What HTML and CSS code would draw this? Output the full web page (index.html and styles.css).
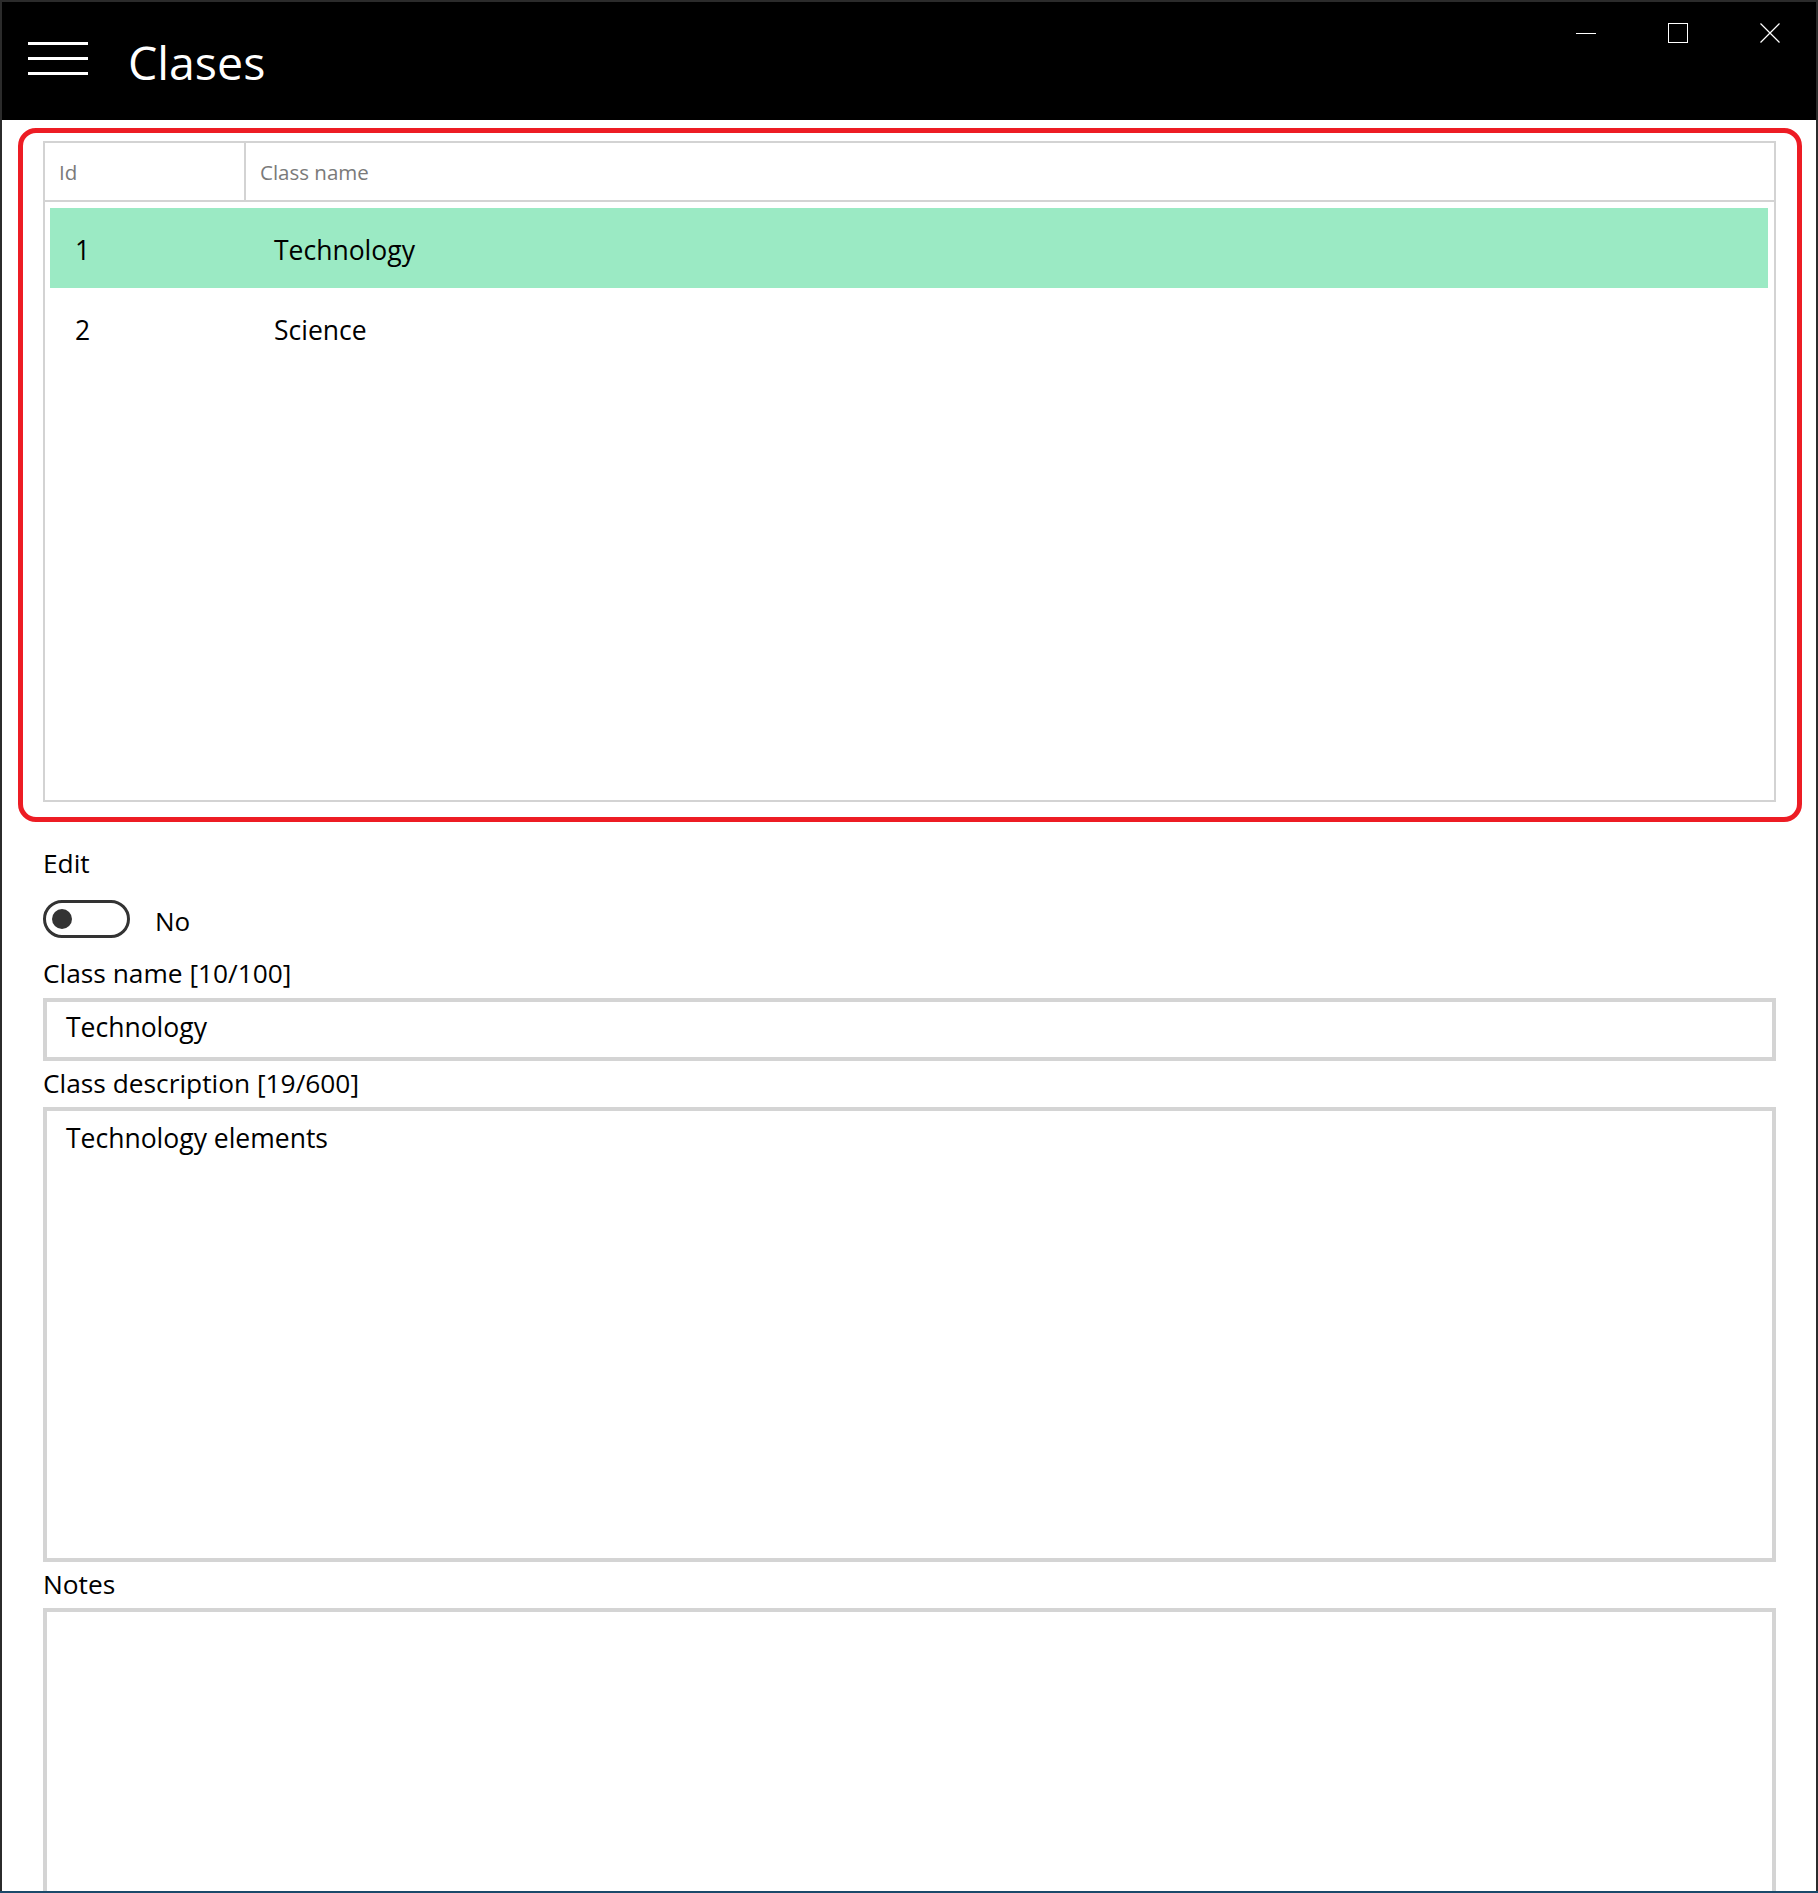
FILE: index.html
```html
<!DOCTYPE html>
<html lang="es">
<head>
<meta charset="utf-8">
<title>Clases</title>
<link rel="stylesheet" href="styles.css">
</head>
<body>
<div class="window">
  <header class="titlebar">
    <div class="hamburger"><span></span><span></span><span></span></div>
    <h1 class="title">Clases</h1>
    <div class="controls">
      <div class="ctl"><svg width="20" height="20" viewBox="0 0 20 20"><line x1="0" y1="10.5" x2="20" y2="10.5" stroke="#fff" stroke-width="1"/></svg></div>
      <div class="ctl"><svg width="20" height="20" viewBox="0 0 20 20"><rect x="0.5" y="0.5" width="19" height="19" fill="none" stroke="#fff" stroke-width="1"/></svg></div>
      <div class="ctl"><svg width="20" height="20" viewBox="0 0 20 20"><path d="M0.5 0.5 L19.5 19.5 M19.5 0.5 L0.5 19.5" fill="none" stroke="#fff" stroke-width="1.2"/></svg></div>
    </div>
  </header>
  <main class="content">
    <section class="highlight">
      <div class="grid">
        <div class="grid-head">
          <div class="hcell hcell-id">Id</div>
          <div class="hcell">Class name</div>
        </div>
        <div class="rows">
          <div class="row selected"><div class="cell">1</div><div class="cell cell-name">Technology</div></div>
          <div class="row"><div class="cell">2</div><div class="cell cell-name">Science</div></div>
        </div>
      </div>
    </section>
    <section class="form">
      <div class="label label-edit">Edit</div>
      <div class="toggle-row">
        <div class="toggle"><span class="knob"></span></div>
        <span class="toggle-text">No</span>
      </div>
      <div class="label label-name">Class name [10/100]</div>
      <div class="textbox">Technology</div>
      <div class="label label-desc">Class description [19/600]</div>
      <div class="textarea">Technology elements</div>
      <div class="label label-notes">Notes</div>
      <div class="textarea notes"></div>
    </section>
  </main>
</div>
</body>
</html>
```
FILE: styles.css
```css
* { box-sizing: border-box; }
html, body { margin: 0; padding: 0; }
body {
  background: #1b4a6b;
  font-family: "Open Sans", "Noto Sans", sans-serif;
  color: #000;
  width: 1818px;
  height: 1893px;
  overflow: hidden;
}
.window {
  width: 1818px;
  height: 1891px;
  background: #fff;
  border-top: 2px solid #2b2b2b;
  border-left: 2px solid #2b2b2b;
  border-right: 2px solid #2b2b2b;
  display: flex;
  flex-direction: column;
  overflow: hidden;
}
.titlebar {
  height: 118px;
  background: #000;
  display: flex;
  align-items: flex-start;
  padding-left: 26px;
  flex: none;
}
.hamburger {
  width: 60px;
  margin-top: 40px;
  display: flex;
  flex-direction: column;
  gap: 12px;
}
.hamburger span {
  display: block;
  height: 3px;
  background: #fff;
}
.title {
  margin: 37px 0 0 40px;
  font-size: 46.5px;
  line-height: 46px;
  font-weight: 400;
  color: #fff;
}
.controls {
  margin-left: auto;
  display: flex;
}
.ctl {
  width: 92px;
  height: 62px;
  display: flex;
  align-items: center;
  justify-content: center;
}
.ctl svg { display: block; }
.content {
  flex: 1;
  display: flex;
  flex-direction: column;
  min-height: 0;
}
.highlight {
  margin: 8px 14px 0 16px;
  border: 5px solid #ed1c24;
  border-radius: 18px;
  padding: 8px 21px 15px 20px;
}
.grid {
  height: 661px;
  border: 2px solid #d3d3d3;
}
.grid-head {
  display: flex;
  height: 59px;
  border-bottom: 2px solid #d3d3d3;
}
.hcell {
  font-size: 20.5px;
  color: #7a7a7a;
  padding-left: 14px;
  display: flex;
  align-items: center;
}
.hcell-id {
  width: 201px;
  border-right: 2px solid #d3d3d3;
}
.rows {
  padding: 6px 6px 0 5px;
}
.row {
  height: 80px;
  display: grid;
  grid-template-columns: 198px 1fr;
  align-items: center;
  font-size: 26.5px;
}
.row.selected { background: #9beac4; }
.cell { padding-left: 25px; padding-top: 4px; }
.cell-name { padding-left: 26px; }
.form {
  padding: 0 40px 0 41px;
  display: flex;
  flex-direction: column;
  flex: 1;
  min-height: 0;
}
.label {
  font-size: 26.3px;
  line-height: 32px;
}
.label-edit { margin-top: 25px; }
.toggle-row {
  margin-top: 21px;
  display: flex;
  align-items: flex-start;
}
.toggle {
  width: 87px;
  height: 38px;
  border: 3px solid #333;
  border-radius: 19px;
  display: flex;
  align-items: center;
  padding-left: 6px;
}
.knob {
  width: 20px;
  height: 20px;
  border-radius: 50%;
  background: #333;
}
.toggle-text {
  margin: 2px 0 0 25px;
  font-size: 26px;
  line-height: 38px;
}
.label-name { margin-top: 17px; }
.textbox {
  margin-top: 9px;
  height: 63px;
  border: 4px solid #d4d4d4;
  font-size: 26.5px;
  line-height: 50px;
  padding-left: 19px;
}
.label-desc { margin-top: 6px; }
.textarea {
  margin-top: 8px;
  height: 455px;
  border: 4px solid #d4d4d4;
  font-size: 26.5px;
  line-height: 36px;
  padding: 9px 0 0 19px;
}
.label-notes { margin-top: 6px; }
.notes {
  height: auto;
  flex: 1;
  border-bottom: none;
}
```
